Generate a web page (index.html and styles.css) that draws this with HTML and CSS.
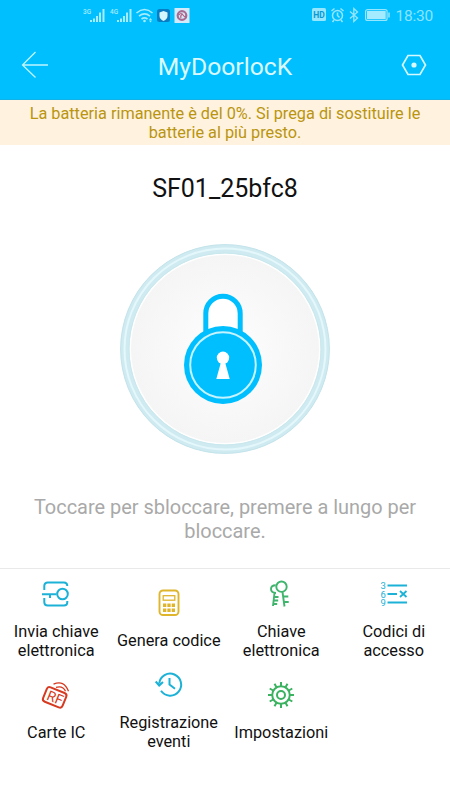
FILE: index.html
```html
<!DOCTYPE html>
<html lang="it">
<head>
<meta charset="utf-8">
<title>MyDoorlocK</title>
<link rel="stylesheet" href="styles.css">
</head>
<body>
<header class="top">
  <div class="status">
    <svg class="status-left" width="108" height="18" viewBox="0 0 108 18" fill="#a5ecff">
      <text x="0" y="8" class="net">3G</text>
      <path d="M7 14h2v2H7zM10 12.500h2V16h-2zM13 10h2v6h-2zM16 6.500h2V16h-2zM19.500 3h2v13h-2z"/>
      <text x="27" y="8" class="net">4G</text>
      <path d="M34 14h2v2h-2zM37 12.500h2V16h-2zM40 10h2v6h-2zM43 6.500h2V16h-2zM46.500 3h2v13h-2z"/>
      <g fill="none" stroke="#a5ecff" stroke-width="1.600"><path d="M53.500 7q8-7 16 0M56 10.200q5.500-4.500 11 0M58.500 13q3-2.300 6 0"/></g>
      <circle cx="61.500" cy="15" r="1.300"/><path d="M67.500 12l1.500 2h-3zM67.500 16.500l1.500-2h-3z"/>
      <rect x="74" y="3" width="13" height="13" rx="2.500" fill="#087dc4"/>
      <path d="M80.500 5l4 1.500v3.500q0 3-4 5-4-2-4-5V6.500z" fill="#d5f5ff"/>
      <rect x="91.500" y="2" width="15" height="15" fill="#d3eafa"/>
      <circle cx="99" cy="9.500" r="4.300" fill="none" stroke="#a86c93" stroke-width="2.200"/>
      <path d="M96 9q2-3 4 0t3 1M98 12q-1-3 2-4" fill="none" stroke="#b65d80" stroke-width="1.200"/>
    </svg>
    <div class="status-right">
      <svg width="78" height="18" viewBox="0 0 78 18" fill="none" stroke="#95e6ff" stroke-width="1.500">
        <rect x="0" y="2" width="14" height="13" rx="1.500" fill="#95e6ff" stroke="none"/>
        <text class="hd" x="7" y="11.700">HD</text>
        <circle cx="25.500" cy="9.500" r="5"/><path d="M25.500 6.500v3l2 2M19.500 5l3-2.500M31.500 5l-3-2.500M22 14l-1.500 2M29 14l1.500 2"/>
        <path d="M38 5.500l7.500 6.500-3.700 3.500V2.500L45.500 6 38 12.500" stroke-width="1.300"/>
        <rect x="53.600" y="3.600" width="21.500" height="10.800" rx="2" stroke-width="1.200"/>
        <rect x="55" y="5" width="18.700" height="8" fill="#a5ebff" stroke="none"/><path d="M77 6.500v5"/>
      </svg>
      <span class="clock">18:30</span>
    </div>
  </div>
  <div class="bar">
    <svg width="28" height="28" viewBox="0 0 28 28" fill="none" stroke="#bff4ff" stroke-width="1.300"><path d="M14.500 1L1.500 14l13 12.500M1.500 14H27"/></svg>
    <h1>MyDoorlocK</h1>
    <svg width="26" height="22" viewBox="0 0 26 22" fill="none" stroke="#d6f8ff" stroke-width="1.700"><path d="M7 1.500h12l5.500 9.500L19 20.500H7L1.500 11z"/><circle cx="13" cy="11" r="2.600" fill="#d6f8ff" stroke="none"/></svg>
  </div>
</header>
<p class="warning">La batteria rimanente è del 0%. Si prega di sostituire le<br>batterie al più presto.</p>
<main>
  <h2>SF01_25bfc8</h2>
  <svg class="lock" width="210" height="210" viewBox="0 0 210 210">
    <defs><radialGradient id="face"><stop offset="0.300" stop-color="#fbfbfb"/><stop offset="1" stop-color="#f5f5f5"/></radialGradient></defs>
    <circle cx="105" cy="105" r="100" fill="#fff" stroke="#cfebf1" stroke-width="9"/>
    <circle cx="105" cy="105" r="104.400" fill="none" stroke="#c3e3ea"/>
    <circle cx="105" cy="105" r="100.500" fill="none" stroke="#e4f7fb" stroke-width="2"/>
    <circle cx="105" cy="105" r="96" fill="none" stroke="#c6e6ec" stroke-width="0.800"/>
    <circle cx="105" cy="105" r="94" fill="url(#face)"/>
    <path d="M85.800 92V69.500a17.200 17.200 0 0 1 34.400 0V92" fill="#fff" stroke="#00bfff" stroke-width="5"/>
    <circle cx="103" cy="121" r="39" fill="#00bfff"/>
    <circle cx="103" cy="121" r="32.800" fill="none" stroke="#c5f3ff" stroke-width="2"/>
    <circle cx="103" cy="113.800" r="6.200" fill="#fff"/><path d="M101.300 117h3.400l5 18H96.300z" fill="#fff"/>
  </svg>
  <p class="hint">Toccare per sbloccare, premere a lungo per<br>bloccare.</p>
</main>
<nav class="menu">
  <div class="item">
    <svg viewBox="0 0 28 28" fill="none" stroke="#1cb1d6" stroke-width="2"><path d="M2.300 10V6q0-3.500 3.500-3.500h16q3.500 0 3.500 3.500M2.300 18v4q0 3.500 3.500 3.500h16q3.500 0 3.500-3.500v-1M0 14.300h14.500M8 14.300V18"/><circle cx="20.500" cy="14" r="5.300"/></svg>
    <span>Invia chiave<br>elettronica</span>
  </div>
  <div class="item">
    <svg viewBox="0 0 28 28" fill="none" stroke="#dfb52c" stroke-width="1.900"><rect x="4.500" y="1.500" width="19" height="24.500" rx="3.500"/><rect x="8.200" y="6.700" width="11.600" height="4.500" stroke-width="1.300"/><path d="M8 16.200h12M8 21.200h12" stroke-width="3.500" stroke-dasharray="3.300 1.050"/></svg>
    <span>Genera codice</span>
  </div>
  <div class="item">
    <svg viewBox="0 0 28 28" fill="none" stroke="#3fb46c" stroke-width="1.900"><circle cx="14.500" cy="6.700" r="5.200"/><path d="M8.700 5.200Q4 5.200 4 9t5 4M7.500 13L6 26M7 17h4.500M6.700 20.500h4.500M6.200 24h4M15.500 12l2 14.500M16.300 16.500h5M17.200 22h4.500"/></svg>
    <span>Chiave<br>elettronica</span>
  </div>
  <div class="item">
    <svg viewBox="0 0 28 28" fill="none" stroke="#1cb1d6" stroke-width="1.800"><path d="M7.500 5.500H27M7.500 14h9.500M7.500 22.500H27M20 11l6.500 6M26.500 11l-6.500 6"/><text class="digits"><tspan x="0.500" y="9">3</tspan><tspan x="0.500" y="17.500">6</tspan><tspan x="0.500" y="26">9</tspan></text></svg>
    <span>Codici di<br>accesso</span>
  </div>
  <div class="item">
    <svg viewBox="0 0 28 28" fill="none" stroke="#d63a20" stroke-width="2"><g transform="rotate(22 12.500 16)"><rect x="2.300" y="8.500" width="21" height="15.500" rx="3"/><text class="rf" x="13.300" y="21.400">RF</text></g><path d="M11.500 3.200Q22-1.500 26.500 10.300M14 6.300q7-2 9.500 4" stroke-width="1.300"/></svg>
    <span>Carte IC</span>
  </div>
  <div class="item">
    <svg viewBox="0 0 28 28" fill="none" stroke="#1cb1d6" stroke-width="2"><path d="M4.200 12.500A11 11 0 1 1 6 19.800M.7 10.500l3.500 4 3.800-3.500M14.500 7v6.500l5.500 4.200"/></svg>
    <span>Registrazione<br>eventi</span>
  </div>
  <div class="item">
    <svg viewBox="0 0 28 28" fill="none" stroke="#3ab25f" stroke-width="2"><circle cx="14" cy="14" r="8.800"/><circle cx="14" cy="14" r="4"/><path d="M14 1v4M14 23v4M1 14h4M23 14h4M7.500 2.700l2 3.500M18.500 21.800l2 3.500M2.700 7.500l3.500 2M21.800 18.500l3.500 2M2.700 20.500l3.500-2M21.800 9.500l3.500-2M7.500 25.300l2-3.500M18.500 6.200l2-3.500"/></svg>
    <span>Impostazioni</span>
  </div>
</nav>
</body>
</html>
```
FILE: styles.css
```css
* { box-sizing: border-box; }
body {
  margin: 0;
  height: 800px;
  overflow: hidden;
  background: #fff;
  color: #111;
  font-family: Roboto, "Liberation Sans", sans-serif;
}
h1, h2, p { margin: 0; font-weight: 400; text-align: center; }
svg { display: block; flex: none; }
.top { height: 100px; background: #00bfff; border-bottom: 1px solid #13b2e6; }
.status {
  display: flex;
  justify-content: space-between;
  height: 32px;
  padding: 6px 17px 0 83px;
}
.status-right { display: flex; gap: 5px; }
.clock { color: #8de4ff; font-size: 15.500px; line-height: 20px; letter-spacing: -0.200px; }
.net { font-size: 6.500px; font-weight: 500; }
.hd { fill: #0799d0; stroke: none; font-size: 8.500px; font-weight: 700; text-anchor: middle; }
.bar {
  display: flex;
  align-items: center;
  justify-content: space-between;
  height: 66px;
  padding: 0 23px 0 21px;
}
h1 { color: #d9f9ff; font-size: 24.700px; line-height: 32px; padding: 4px 0 0 0; }
.warning {
  height: 45px;
  padding-top: 4px;
  background: #fff2df;
  color: #b99510;
  font-size: 16.300px;
  line-height: 19px;
  white-space: nowrap;
}
main { height: 424px; padding-top: 28px; border-bottom: 1px solid #e9e9e9; }
h2 { font-size: 25px; line-height: 32px; }
.lock { margin: 39px auto 0; }
.hint { margin-top: 41px; color: #a9a9a9; font-size: 19.950px; line-height: 24px; }
.menu {
  display: grid;
  grid-template-columns: repeat(4, 1fr);
  grid-template-rows: 91px 92px;
  padding-top: 5px;
}
.item {
  display: flex;
  flex-direction: column;
  align-items: center;
  justify-content: center;
  gap: 14px;
  font-size: 16.300px;
  line-height: 19px;
  text-align: center;
  white-space: nowrap;
}
.item svg { width: 28px; height: 28px; overflow: visible; }
.digits { fill: #1cb1d6; stroke: none; font-size: 9.500px; }
.rf { fill: #d63a20; stroke: none; font-size: 14px; text-anchor: middle; }
```
